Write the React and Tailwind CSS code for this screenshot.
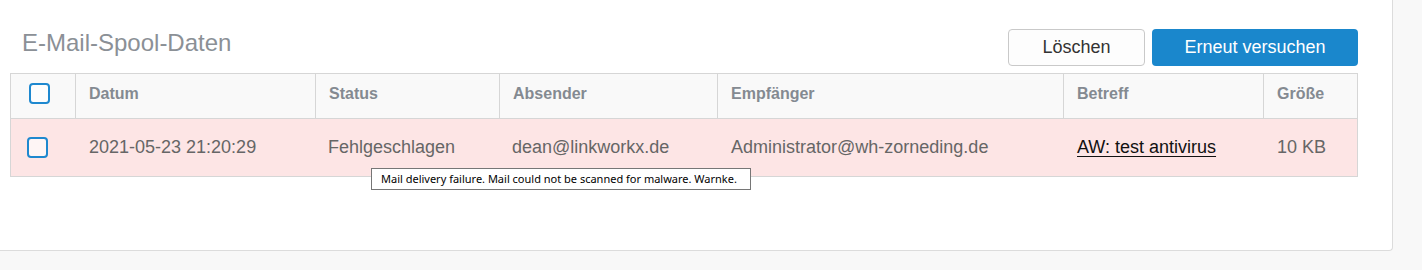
import React from 'react';

const COLS = 'grid grid-cols-[64px_240px_184px_218px_346px_200px_94px]';

function Box({ className = '' }) {
  return <span className={`block w-[21px] h-[21px] rounded-[4px] border-2 border-[#1e88cf] bg-white/60 ${className}`} />;
}

const HEAD = ['Datum', 'Status', 'Absender', 'Empfänger', 'Betreff', 'Größe'];

export default function App() {
  return (
    <div className="h-[270px] bg-[#f8f8f8] font-['Liberation_Sans',Arial,sans-serif]">
      <div className="relative w-[1393px] h-[251px] bg-white border-r border-b border-[#dcdcdc] rounded-br-[4px] pt-[29px] pl-[10px] pr-[34px]">
        {/* Kopfzeile */}
        <div className="flex items-start justify-between">
          <h1 className="pl-[12px] pt-[1px] text-[24px] leading-[26px] text-[#8b9096] font-normal">E-Mail-Spool-Daten</h1>
          <div className="flex gap-[7px]">
            <button className="h-[37px] w-[137px] rounded-[4px] border border-[#c9c9c9] bg-[#fdfdfd] text-[18px] text-[#333]">Löschen</button>
            <button className="h-[37px] w-[206px] rounded-[4px] bg-[#1a87cc] text-[18px] text-white">Erneut versuchen</button>
          </div>
        </div>

        {/* Tabelle */}
        <div className="mt-[7px] border border-[#d6d6d6]">
          <div className={`${COLS} h-[45px] bg-[#f9f9f9] border-b border-[#d6d6d6]`}>
            <div className="flex items-center pl-[18px] pb-[6px]"><Box /></div>
            {HEAD.map(h => (
              <div key={h} className="flex items-center border-l border-[#d6d6d6] pl-[13px] pb-[5px] text-[16px] font-bold text-[#848a91]">{h}</div>
            ))}
          </div>
          <div className={`${COLS} h-[57px] bg-[#fde5e5] text-[18px] text-[#666]`}>
            <div className="flex items-center pl-[16px]"><Box /></div>
            <div className="flex items-center pl-[14px]">2021-05-23 21:20:29</div>
            <div className="flex items-center pl-[13px]">Fehlgeschlagen</div>
            <div className="flex items-center pl-[13px]">dean@linkworkx.de</div>
            <div className="flex items-center pl-[14px]">Administrator@wh-zorneding.de</div>
            <div className="flex items-center pl-[14px]">
              <a href="#" className="text-[#111] underline underline-offset-[3px]">AW: test antivirus</a>
            </div>
            <div className="flex items-center pl-[14px]">10 KB</div>
          </div>
        </div>

        {/* Tooltip */}
        <div className="absolute left-[371px] top-[168px] w-[380px] h-[22px] border border-[#767676] bg-white flex items-center pl-[9px] text-[11px] text-black font-['Noto_Sans',sans-serif] whitespace-nowrap">
          Mail delivery failure. Mail could not be scanned for malware. Warnke.
        </div>
      </div>
    </div>
  );
}
